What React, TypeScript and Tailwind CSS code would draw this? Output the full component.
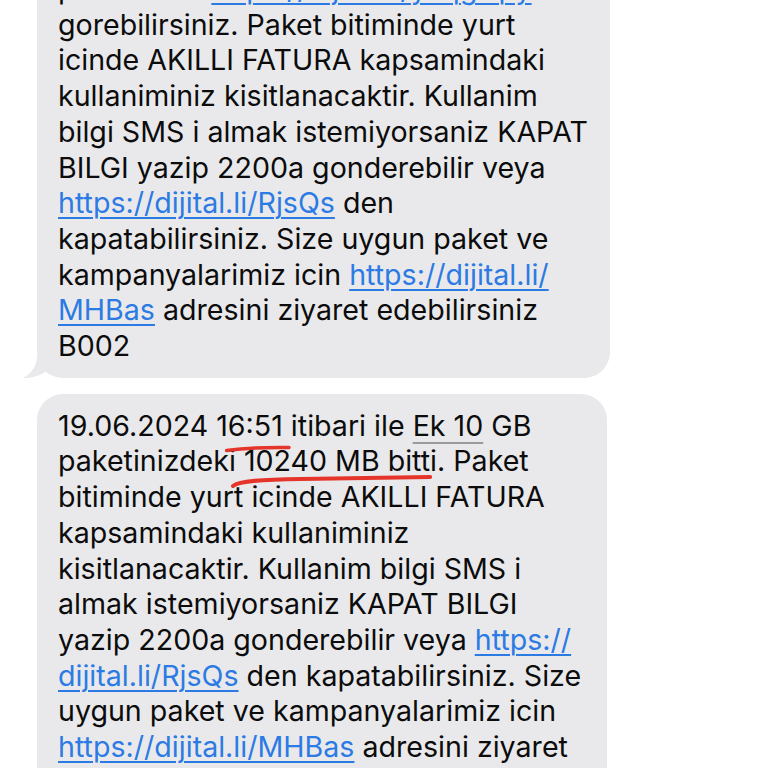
import React from 'react'

const Link = ({ children }: { children: React.ReactNode }) => (
    <span className="text-[#2c7be5] underline decoration-[#2c7be5] decoration-[1.5px] underline-offset-[4px]">
        {children}
    </span>
)

const Line = ({ children }: { children: React.ReactNode }) => (
    <div className="whitespace-nowrap">{children}</div>
)

// hand drawn red mark under a piece of text
const Scribble = ({ children, variant }: { children: React.ReactNode; variant: 'short' | 'long' }) => (
    <span className="relative inline-block">
        {children}
        {variant === 'short' ? (
            <svg
                className="absolute left-[10px] top-[37px] h-[8px] w-[calc(100%-3px)] overflow-visible"
                viewBox="0 0 100 8"
                preserveAspectRatio="none"
            >
                <path d="M1 5.5 Q40 2 99 2.5" fill="none" stroke="#e5352b" strokeWidth="3.5" strokeLinecap="round" vectorEffect="non-scaling-stroke" />
            </svg>
        ) : (
            <svg
                className="absolute left-[-13px] top-[32px] h-[13px] w-[calc(100%+8px)] overflow-visible"
                viewBox="0 0 200 13"
                preserveAspectRatio="none"
            >
                <path d="M2 11 C8 6 30 4.5 70 4 L198 2" fill="none" stroke="#e5352b" strokeWidth="4" strokeLinecap="round" vectorEffect="non-scaling-stroke" />
            </svg>
        )}
    </span>
)

const Detected = ({ children }: { children: React.ReactNode }) => (
    <span className="underline decoration-[#9a9a9e] decoration-[1.5px] underline-offset-[6px]">{children}</span>
)

export default function App() {
    return (
        <div
            className="w-[768px] h-[768px] overflow-hidden bg-white text-[28.6px] leading-[35.7px] text-[#0c0c0c]"
            style={{ fontFamily: 'Inter, "Noto Sans", sans-serif' }}
        >
            <div className="-mt-[43px] pl-[37px] flex flex-col gap-[16px]">
                {/* first message */}
                <div className="relative w-[573px] rounded-[26px] bg-[#e9e9eb] pl-[21px] py-[14px]">
                    <Line>paketinizin <Link>https://dijital.li/yTqgGpy</Link></Line>
                    <Line>gorebilirsiniz. Paket bitiminde yurt</Line>
                    <Line>icinde AKILLI FATURA kapsamindaki</Line>
                    <Line>kullaniminiz kisitlanacaktir. Kullanim</Line>
                    <Line>bilgi SMS i almak istemiyorsaniz KAPAT</Line>
                    <Line>BILGI yazip 2200a gonderebilir veya</Line>
                    <Line><Link>https://dijital.li/RjsQs</Link> den</Line>
                    <Line>kapatabilirsiniz. Size uygun paket ve</Line>
                    <Line>kampanyalarimiz icin <Link>https://dijital.li/</Link></Line>
                    <Line><Link>MHBas</Link> adresini ziyaret edebilirsiniz</Line>
                    <Line>B002</Line>
                    <svg className="absolute left-[-14px] bottom-0 w-[30px] h-[22px]" viewBox="0 0 30 22">
                        <path d="M14 0 C14 10 8 18 0 22 C8 22 16 20 22 16 L30 16 L30 0 Z" fill="#e9e9eb" />
                    </svg>
                </div>

                {/* second message */}
                <div className="w-[570px] rounded-[26px] bg-[#e9e9eb] pl-[21px] py-[14px]">
                    <Line>19.06.2024 <Scribble variant="short">16:51</Scribble> itibari ile <Detected>Ek 10</Detected> GB</Line>
                    <Line>paketinizdeki <Scribble variant="long">10240 MB bitti</Scribble>. Paket</Line>
                    <Line>bitiminde yurt icinde AKILLI FATURA</Line>
                    <Line>kapsamindaki kullaniminiz</Line>
                    <Line>kisitlanacaktir. Kullanim bilgi SMS i</Line>
                    <Line>almak istemiyorsaniz KAPAT BILGI</Line>
                    <Line>yazip 2200a gonderebilir veya <Link>https://</Link></Line>
                    <Line><Link>dijital.li/RjsQs</Link> den kapatabilirsiniz. Size</Line>
                    <Line>uygun paket ve kampanyalarimiz icin</Line>
                    <Line><Link>https://dijital.li/MHBas</Link> adresini ziyaret</Line>
                    <Line>edebilirsiniz B002</Line>
                </div>
            </div>
        </div>
    )
}
